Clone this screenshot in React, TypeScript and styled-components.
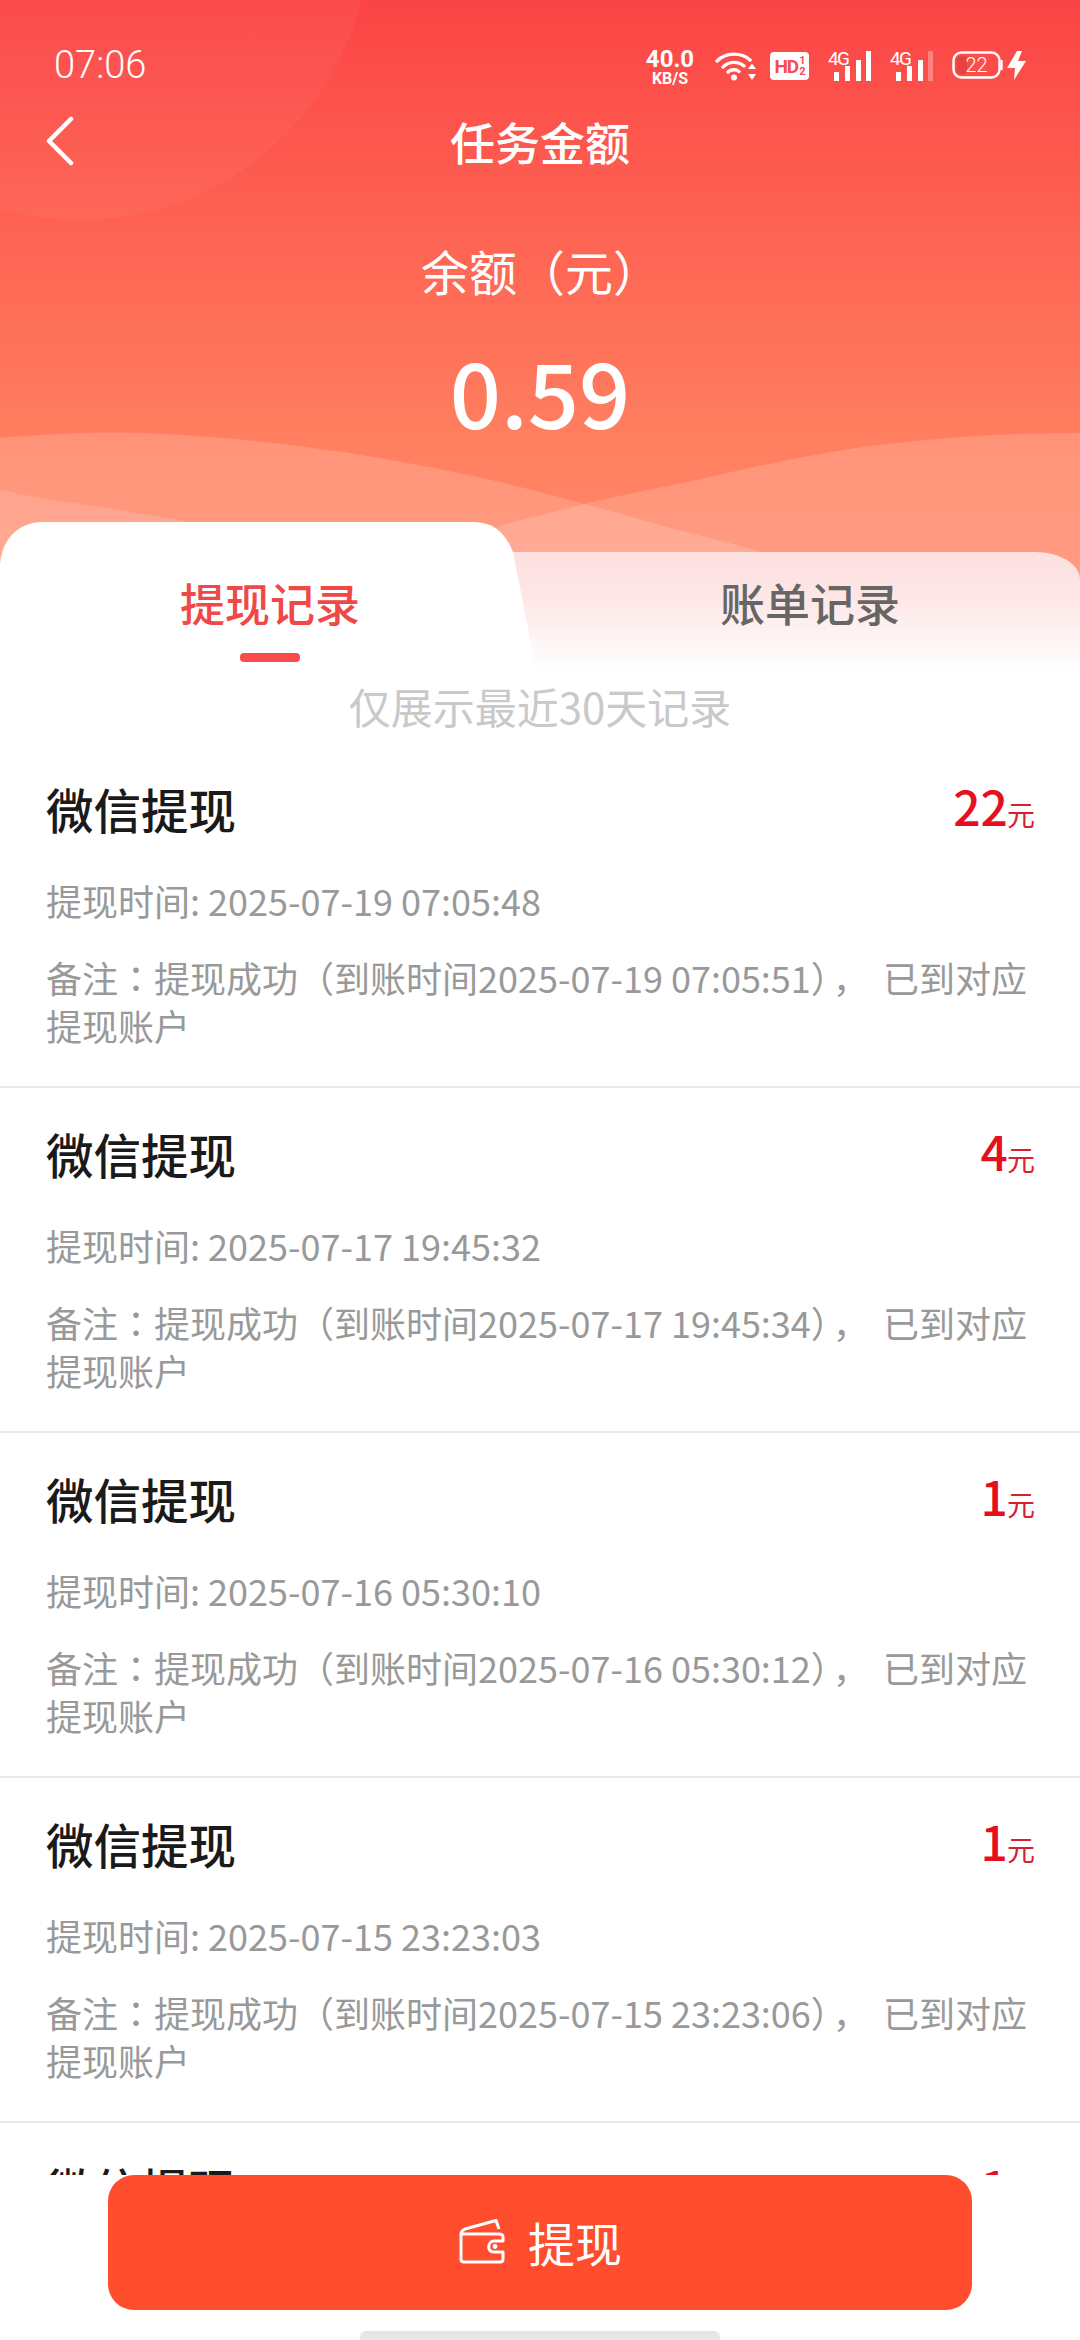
import React from "react";
import styled, { createGlobalStyle } from "styled-components";

const Global = createGlobalStyle`
  html, body { margin: 0; padding: 0; background: #fff; }
  * { box-sizing: border-box; }
  body { font-family: "Noto Sans CJK SC", "Noto Sans", sans-serif; }
`;

const Page = styled.div`
  width: 1080px;
  height: 2340px;
  display: flex;
  flex-direction: column;
  overflow: hidden;
  position: relative;
  background: #fff;
`;

const Hero = styled.header`
  position: relative;
  height: 522px;
  flex: none;
  color: #fff;
`;

const HeroArt = styled.svg`
  position: absolute;
  left: 0;
  top: 0;
  width: 1080px;
  height: 620px;
  z-index: 0;
`;

const StatusBar = styled.div`
  position: relative;
  height: 100px;
  padding: 49px 54px 0 54px;
  display: flex;
  justify-content: space-between;
  align-items: flex-start;
`;

const Clock = styled.span`
  font-family: Roboto, sans-serif;
  font-size: 38px;
  line-height: 32px;
  font-weight: 300;
`;

const StatusIcons = styled.div`
  display: flex;
  align-items: flex-start;
`;

const Speed = styled.div`
  width: 50px;
  margin-right: 20px;
  text-align: center;
  font-family: Roboto, sans-serif;
  font-weight: 700;
  display: flex;
  flex-direction: column;
  align-items: center;
`;

const SpeedValue = styled.span`
  font-size: 24px;
  line-height: 20px;
`;

const SpeedUnit = styled.span`
  font-size: 16px;
  line-height: 16px;
  margin-top: 2px;
`;

const HdBadge = styled.div`
  width: 39px;
  height: 28px;
  margin: 3px 19px 0 13px;
  border-radius: 4px;
  background: #fff;
  color: #f94b4b;
  display: flex;
  align-items: center;
  justify-content: center;
  font-family: Roboto, sans-serif;
  font-weight: 700;
  font-size: 19px;
  letter-spacing: -1px;
  line-height: 1;
`;

const HdFraction = styled.span`
  display: flex;
  flex-direction: column;
  font-size: 11px;
  line-height: 11px;
  margin-left: 1px;
`;

const NavBar = styled.nav`
  position: relative;
  height: 86px;
  padding-bottom: 2px;
  display: flex;
  align-items: center;
  justify-content: center;
`;

const BackIcon = styled.svg`
  position: absolute;
  left: 44px;
  top: 16px;
`;

const NavTitle = styled.h1`
  margin: 0;
  font-size: 45px;
  line-height: 60px;
  font-weight: 500;
`;

const Balance = styled.div`
  position: relative;
  display: flex;
  flex-direction: column;
  align-items: center;
  padding-top: 54px;
`;

const BalanceLabel = styled.div`
  font-size: 48px;
  line-height: 60px;
  width: 240px;
  margin-left: 2px;
`;

const BalanceValue = styled.div`
  font-size: 90px;
  line-height: 100px;
  margin-top: 40px;
  font-weight: 500;
`;

const TabBar = styled.div`
  position: relative;
  z-index: 1;
  height: 148px;
  flex: none;
  display: flex;
`;

const ActiveTab = styled.div`
  position: relative;
  z-index: 2;
  width: 540px;
  height: 148px;
  background: #fff;
  clip-path: path("M0 148 L0 42 C2 16 20 0 42 0 L474 0 C494 0 506 12 513 30 L536 148 Z");
  display: flex;
  flex-direction: column;
  align-items: center;
`;

const PlainTab = styled.div`
  position: relative;
  width: 540px;
  height: 148px;
  display: flex;
  flex-direction: column;
  align-items: center;
  &::before {
    content: "";
    position: absolute;
    left: -60px;
    right: 0;
    top: 30px;
    bottom: 0;
    border-radius: 0 45px 0 0 / 0 27px 0 0;
    background: linear-gradient(180deg, #fde0e0 0%, #fee6e6 38%, #ffffff 100%);
  }
`;

const TabLabel = styled.span<{ $active?: boolean }>`
  position: relative;
  margin-top: 51px;
  font-size: 45px;
  line-height: 60px;
  font-weight: 500;
  color: ${(p) => (p.$active ? "#f04848" : "#666666")};
`;

const TabMark = styled.i`
  display: block;
  width: 60px;
  height: 9px;
  margin-top: 20px;
  border-radius: 4px;
  background: #f94b4b;
`;

const Notice = styled.div`
  height: 73px;
  flex: none;
  text-align: center;
  font-size: 42px;
  line-height: 72px;
  color: #c9c9c9;
`;

const List = styled.div`
  flex: 1;
  min-height: 0;
  overflow: hidden;
`;

const Row = styled.article`
  height: 345px;
  padding: 39px 45px 0 46px;
  border-bottom: 2px solid #e8e8e8;
`;

const RowHead = styled.div`
  display: flex;
  justify-content: space-between;
  align-items: center;
  height: 54px;
`;

const RowTitle = styled.h2`
  margin: 0;
  font-size: 47.5px;
  line-height: 54px;
  font-weight: 500;
  color: #1a1a1a;
`;

const Amount = styled.div`
  color: #e60f1f;
  font-size: 48px;
  line-height: 54px;
  font-weight: 500;
`;

const AmountUnit = styled.span`
  font-size: 28px;
  font-weight: 400;
  color: #d8212e;
  margin-left: -1px;
`;

const RowTime = styled.div`
  margin-top: 40px;
  font-size: 36px;
  line-height: 48px;
  color: #999999;
`;

const RowNote = styled.div`
  margin-top: 29px;
  font-size: 36px;
  line-height: 48px;
  color: #999999;
`;

const NoteColon = styled.span`
  font-family: "Noto Sans CJK JP", sans-serif;
`;

const NoteComma = styled.span`
  margin: 0 14px 0 4px;
`;

const Footer = styled.footer`
  height: 165px;
  flex: none;
  background: #fff;
  display: flex;
  flex-direction: column;
  align-items: center;
`;

const WithdrawButton = styled.button`
  width: 864px;
  height: 135px;
  border: 0;
  border-radius: 26px;
  background: #ff4d2d;
  color: #fff;
  font: 400 47px/60px "Noto Sans CJK SC", sans-serif;
  display: flex;
  align-items: center;
  justify-content: center;
  gap: 22px;
  padding: 0 0 2px;
`;

const HomeHandle = styled.div`
  width: 360px;
  height: 9px;
  margin-top: 21px;
  border-radius: 6px 6px 0 0;
  background: #e6e6e6;
`;

const records = [
  { amount: "22", time: "2025-07-19 07:05:48", done: "2025-07-19 07:05:51" },
  { amount: "4", time: "2025-07-17 19:45:32", done: "2025-07-17 19:45:34" },
  { amount: "1", time: "2025-07-16 05:30:10", done: "2025-07-16 05:30:12" },
  { amount: "1", time: "2025-07-15 23:23:03", done: "2025-07-15 23:23:06" },
  { amount: "1", time: "2025-07-15 10:12:20", done: "2025-07-15 10:12:23" },
];

const Wifi = () => (
  <svg width="42" height="30" viewBox="0 0 42 30" style={{ marginTop: 2 }}>
    <g fill="none" stroke="#fff" strokeWidth="3.4" strokeLinecap="round">
      <path d="M2 10 C11 1 26 1 35 9" />
      <path d="M8 16 C14 10 23 10 29 15" />
      <path d="M13 21 C16 18 21 18 24 20.5" />
    </g>
    <circle cx="19" cy="26.5" r="3" fill="#fff" />
    <path d="M37 12.5 L41 18 H33 Z M37 29 L41 23 H33 Z" fill="#fff" />
  </svg>
);

const Signal = ({ faint, mr }: { faint?: boolean; mr: number }) => (
  <svg width="45" height="30" viewBox="0 0 45 30" style={{ marginTop: 2, marginRight: mr }}>
    <text x="0" y="14" fill="#fff" fontSize="19" fontWeight="400" fontFamily="Roboto, sans-serif" textLength="22">4G</text>
    <rect x="6" y="21" width="5" height="9" fill="#fff" />
    <rect x="17" y="15" width="5" height="15" fill="#fff" />
    <rect x="28" y="9" width="5" height="21" fill="#fff" />
    <rect x="38" y="0" width="5" height="30" fill="#fff" fillOpacity={faint ? 0.3 : 1} />
  </svg>
);

const Battery = () => (
  <svg width="74" height="32" viewBox="0 0 74 32" style={{ marginTop: 2 }}>
    <rect x="1.5" y="1.5" width="46" height="25" rx="8" fill="none" stroke="#fff" strokeWidth="2.4" />
    <rect x="5" y="5" width="10" height="18" rx="4" fill="#d93c3c" fillOpacity="0.6" />
    <path d="M49.5 10 V18" stroke="#fff" strokeWidth="2.4" strokeLinecap="round" />
    <text x="24.5" y="21" textAnchor="middle" fill="#fff" fontSize="20" fontWeight="300" fontFamily="Roboto, sans-serif">22</text>
    <path d="M65 0 L55 17 H63 L62 29 L74 10 H66 L70 0 Z" fill="#fff" />
  </svg>
);

const WalletIcon = () => (
  <svg width="48" height="46" viewBox="0 0 48 46" fill="none" stroke="#fff" strokeWidth="3" strokeLinejoin="round">
    <path d="M3 15 C3 12 5 11 7 10 L38 1.5 L41 10" />
    <path d="M3 15 H41 C44 15 45 16 45 18 V22 H36 C30 22 28 33 36 33 H45 V40 C45 42 44 43 42 43 H6 C4 43 3 42 3 40 Z" />
    <circle cx="37" cy="27.5" r="2.4" fill="#fff" stroke="none" />
  </svg>
);

export default function App() {
  return (
    <Page>
      <Global />
      <Hero>
        <HeroArt viewBox="0 0 1080 620">
          <defs>
            <linearGradient id="heroBg" x1="0" y1="0" x2="0" y2="1">
              <stop offset="0" stopColor="#fb4445" />
              <stop offset="0.35" stopColor="#fe6152" />
              <stop offset="0.72" stopColor="#ff8060" />
              <stop offset="1" stopColor="#ff8c6e" />
            </linearGradient>
          </defs>
          <rect width="1080" height="620" fill="url(#heroBg)" />
          <circle cx="80" cy="-70" r="290" fill="#fff" fillOpacity="0.04" />
          <path d="M0 438 C45 434 90 432 140 433 C260 437 380 455 500 482 C560 496 620 514 671 528 C705 537 740 545 790 560 L790 620 L0 620 Z" fill="#fff" fillOpacity="0.16" />
          <path d="M1080 433 C1010 433 940 437 863 447 C810 455 760 465 710 477 C665 487 620 495 580 505 C550 513 520 520 499 526 L400 620 L1080 620 Z" fill="#fff" fillOpacity="0.16" />
          <path d="M0 490 C60 503 130 510 190 522 L300 620 L0 620 Z" fill="#fff" fillOpacity="0.14" />
        </HeroArt>
        <StatusBar>
          <Clock>07:06</Clock>
          <StatusIcons>
            <Speed>
              <SpeedValue>40.0</SpeedValue>
              <SpeedUnit>KB/S</SpeedUnit>
            </Speed>
            <Wifi />
            <HdBadge>
              HD
              <HdFraction>
                <span>1</span>
                <span>2</span>
              </HdFraction>
            </HdBadge>
            <Signal mr={17} />
            <Signal faint mr={17} />
            <Battery />
          </StatusIcons>
        </StatusBar>
        <NavBar>
          <BackIcon width="30" height="50" viewBox="0 0 30 50" fill="none" stroke="#fff" strokeWidth="4.5" strokeLinecap="round" strokeLinejoin="round">
            <path d="M27 3 L5 25 L27 47" />
          </BackIcon>
          <NavTitle>任务金额</NavTitle>
        </NavBar>
        <Balance>
          <BalanceLabel>余额（元）</BalanceLabel>
          <BalanceValue>0.59</BalanceValue>
        </Balance>
      </Hero>
      <TabBar>
        <ActiveTab>
          <TabLabel $active>提现记录</TabLabel>
          <TabMark />
        </ActiveTab>
        <PlainTab>
          <TabLabel>账单记录</TabLabel>
        </PlainTab>
      </TabBar>
      <Notice>仅展示最近30天记录</Notice>
      <List>
        {records.map((r) => (
          <Row key={r.time}>
            <RowHead>
              <RowTitle>微信提现</RowTitle>
              <Amount>
                {r.amount}
                <AmountUnit>元</AmountUnit>
              </Amount>
            </RowHead>
            <RowTime>提现时间: {r.time}</RowTime>
            <RowNote>
              备注<NoteColon>：</NoteColon>提现成功（到账时间{r.done}）<NoteComma>，</NoteComma>已到对应提现账户
            </RowNote>
          </Row>
        ))}
      </List>
      <Footer>
        <WithdrawButton>
          <WalletIcon />
          提现
        </WithdrawButton>
        <HomeHandle />
      </Footer>
    </Page>
  );
}
